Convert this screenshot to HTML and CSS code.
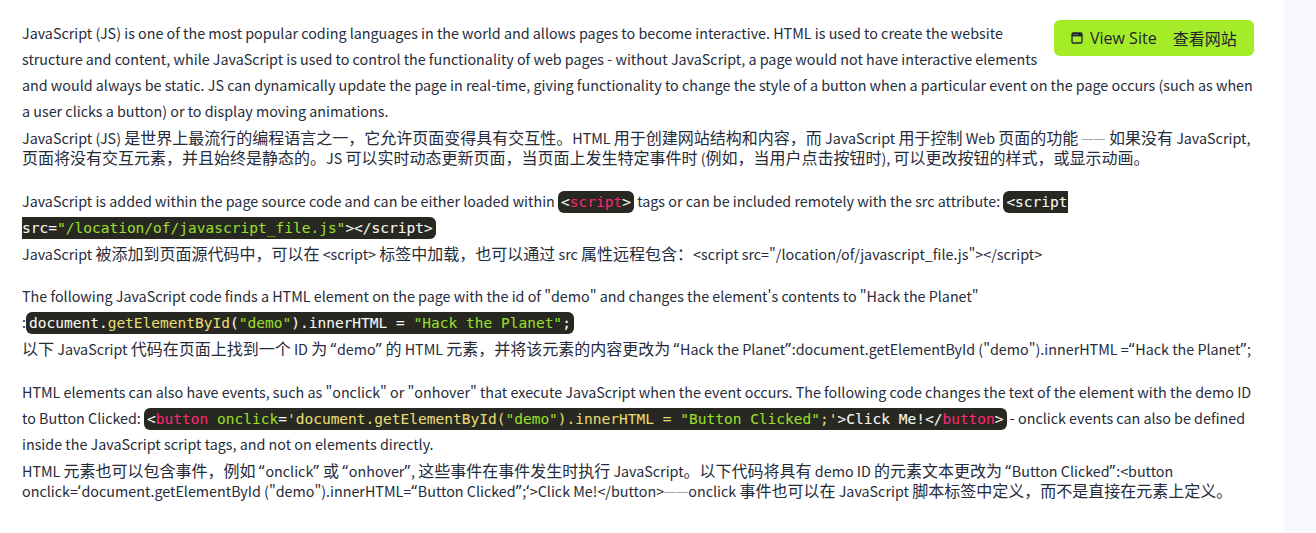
FILE: index.html
```html
<!DOCTYPE html>
<html lang="zh-CN">
<head>
<meta charset="utf-8">
<title>JavaScript</title>
<link rel="stylesheet" href="styles.css">
</head>
<body>
<div class="page">
<main class="content">
<a class="site-btn" href="#">
<svg class="site-icon" viewBox="0 0 12 12" width="12" height="12" aria-hidden="true"><rect x="1" y="1" width="10" height="10" rx="1.2" fill="none" stroke="#1f2430" stroke-width="1.3"/><rect x="1" y="1" width="10" height="3.4" fill="#1f2430"/><circle cx="3" cy="2.7" r="0.5" fill="#a4ec27"/><circle cx="4.8" cy="2.7" r="0.5" fill="#a4ec27"/><circle cx="6.6" cy="2.7" r="0.5" fill="#a4ec27"/></svg>
<span>View Site</span><span class="btn-cn">查看网站</span>
</a>
<section class="block">
<p class="en">JavaScript (JS) is one of the most popular coding languages in the world and allows pages to become interactive. HTML is used to create the website structure and content, while JavaScript is used to control the functionality of web pages - without JavaScript, a page would not have interactive elements and would always be static. JS can dynamically update the page in real-time, giving functionality to change the style of a button when a particular event on the page occurs (such as when a user clicks a button) or to display moving animations.</p>
<p class="cn">JavaScript (JS) <span class="h">是世界上最流行的编程语言之一，它允许页面变得具有交互性。</span>HTML <span class="h">用于创建网站结构和内容，而</span> JavaScript <span class="h">用于控制</span> Web <span class="h">页面的功能</span> <span class="dash">——</span> <span class="h">如果没有</span> JavaScript, <span class="h">页面将没有交互元素，并且始终是静态的。</span>JS <span class="h">可以实时动态更新页面，当页面上发生特定事件时</span> (<span class="h">例如，当用户点击按钮时</span>), <span class="h">可以更改按钮的样式，或显示动画。</span></p>
</section>
<section class="block">
<p class="en">JavaScript is added within the page source code and can be either loaded within <code>&lt;<span class="tag">script</span>&gt;</code> tags or can be included remotely with the src attribute: <code>&lt;script src=<span class="str">"/location/of/javascript_file.js"</span>&gt;&lt;/script&gt;</code></p>
<p class="cn">JavaScript <span class="h">被添加到页面源代码中，可以在</span> &lt;script&gt; <span class="h">标签中加载，也可以通过</span> src <span class="h">属性远程包含：</span>&lt;script src="/location/of/javascript_file.js"&gt;&lt;/script&gt;</p>
</section>
<section class="block">
<p class="en">The following JavaScript code finds a HTML element on the page with the id of "demo" and changes the element's contents to "Hack the Planet" :<code>document.<span class="fn">getElementById</span>(<span class="str">"demo"</span>).innerHTML = <span class="str">"Hack the Planet"</span>;</code></p>
<p class="cn"><span class="h">以下</span> JavaScript <span class="h">代码在页面上找到一个</span> ID <span class="h">为</span> <span class="q">“</span>demo<span class="q">”</span> <span class="h">的</span> HTML <span class="h">元素，并将该元素的内容更改为</span> <span class="q">“</span>Hack the Planet<span class="q">”</span>:document.getElementById ("demo").innerHTML =<span class="q">“</span>Hack the Planet<span class="q">”</span>;</p>
</section>
<section class="block">
<p class="en">HTML elements can also have events, such as "onclick" or "onhover" that execute JavaScript when the event occurs. The following code changes the text of the element with the demo ID to Button Clicked: <code>&lt;<span class="tag">button</span> <span class="str">onclick</span>=<span class="fn">'document.getElementById(</span><span class="str">"demo"</span><span class="fn">).innerHTML = </span><span class="str">"Button Clicked"</span><span class="fn">;'</span>&gt;Click Me!&lt;/<span class="tag">button</span>&gt;</code> - onclick events can also be defined inside the JavaScript script tags, and not on elements directly.</p>
<p class="cn">HTML <span class="h">元素也可以包含事件，例如</span> <span class="q">“</span>onclick<span class="q">”</span> <span class="h">或</span> <span class="q">“</span>onhover<span class="q">”</span>, <span class="h">这些事件在事件发生时执行</span> JavaScript<span class="h">。以下代码将具有</span> demo ID <span class="h">的元素文本更改为</span> <span class="q">“</span>Button Clicked<span class="q">”</span>:&lt;button onclick=<span class="q">‘</span>document.getElementById ("demo").innerHTML=<span class="q">“</span>Button Clicked<span class="q">”</span>;<span class="q">‘</span>&gt;Click Me!&lt;/button&gt;<span class="dash">——</span>onclick <span class="h">事件也可以在</span> JavaScript <span class="h">脚本标签中定义，而不是直接在元素上定义。</span></p>
</section>
</main>
<aside class="rail"></aside>
</div>
</body>
</html>
```
FILE: styles.css
```css
html, body {
  margin: 0;
  padding: 0;
}
body {
  font-family: "Noto Sans CJK SC", "Noto Sans", sans-serif;
  font-size: 14.32px;
  color: #262b3a;
  background: #fff;
}
.page {
  display: flex;
  height: 533px;
  overflow: hidden;
}
.content {
  flex: 1;
  padding: 20px 30px 0 22px;
  min-width: 0;
}
.rail {
  width: 32px;
  background: #f8f9fc;
}
.site-btn {
  float: right;
  display: flex;
  align-items: center;
  width: 200px;
  height: 36px;
  box-sizing: border-box;
  padding-left: 17px;
  margin-left: 10px;
  background: #a4ec27;
  border-radius: 6px;
  color: #1f2430;
  font-family: "Open Sans", "Noto Sans CJK SC", sans-serif;
  font-size: 16px;
  text-decoration: none;
}
.site-icon {
  margin-right: 7px;
}
.btn-cn {
  margin-left: 16px;
  font-family: "Noto Sans CJK SC", sans-serif;
}
.block {
  margin-bottom: 19.5px;
}
.block p {
  margin: 0;
}
.en {
  line-height: 26px;
}
.block .cn {
  margin-top: 4px;
  line-height: 20px;
}
.h {
  font-size: 16px;
  line-height: 1;
}
.q {
  font-family: "Noto Sans", sans-serif;
  font-size: 16px;
  line-height: 1;
  letter-spacing: 0.8px;
}
.dash {
  font-family: "Noto Sans", sans-serif;
  font-size: 11.5px;
  letter-spacing: 0.6px;
  line-height: 1;
  vertical-align: 2px;
  color: #a3a6ae;
  -webkit-text-stroke: 0.3px #a3a6ae;
}
code {
  font-family: "DejaVu Sans Mono", monospace;
  font-size: 14.53px;
  line-height: 1;
  color: #f8f8f2;
  background: #272822;
  border-radius: 6px;
  padding: 3px;
  margin: 0;
  -webkit-text-stroke: 0.08px;
}
.tag {
  color: #f92672;
}
.str {
  color: #98de2a;
}
.fn {
  color: #e6db74;
}
```
